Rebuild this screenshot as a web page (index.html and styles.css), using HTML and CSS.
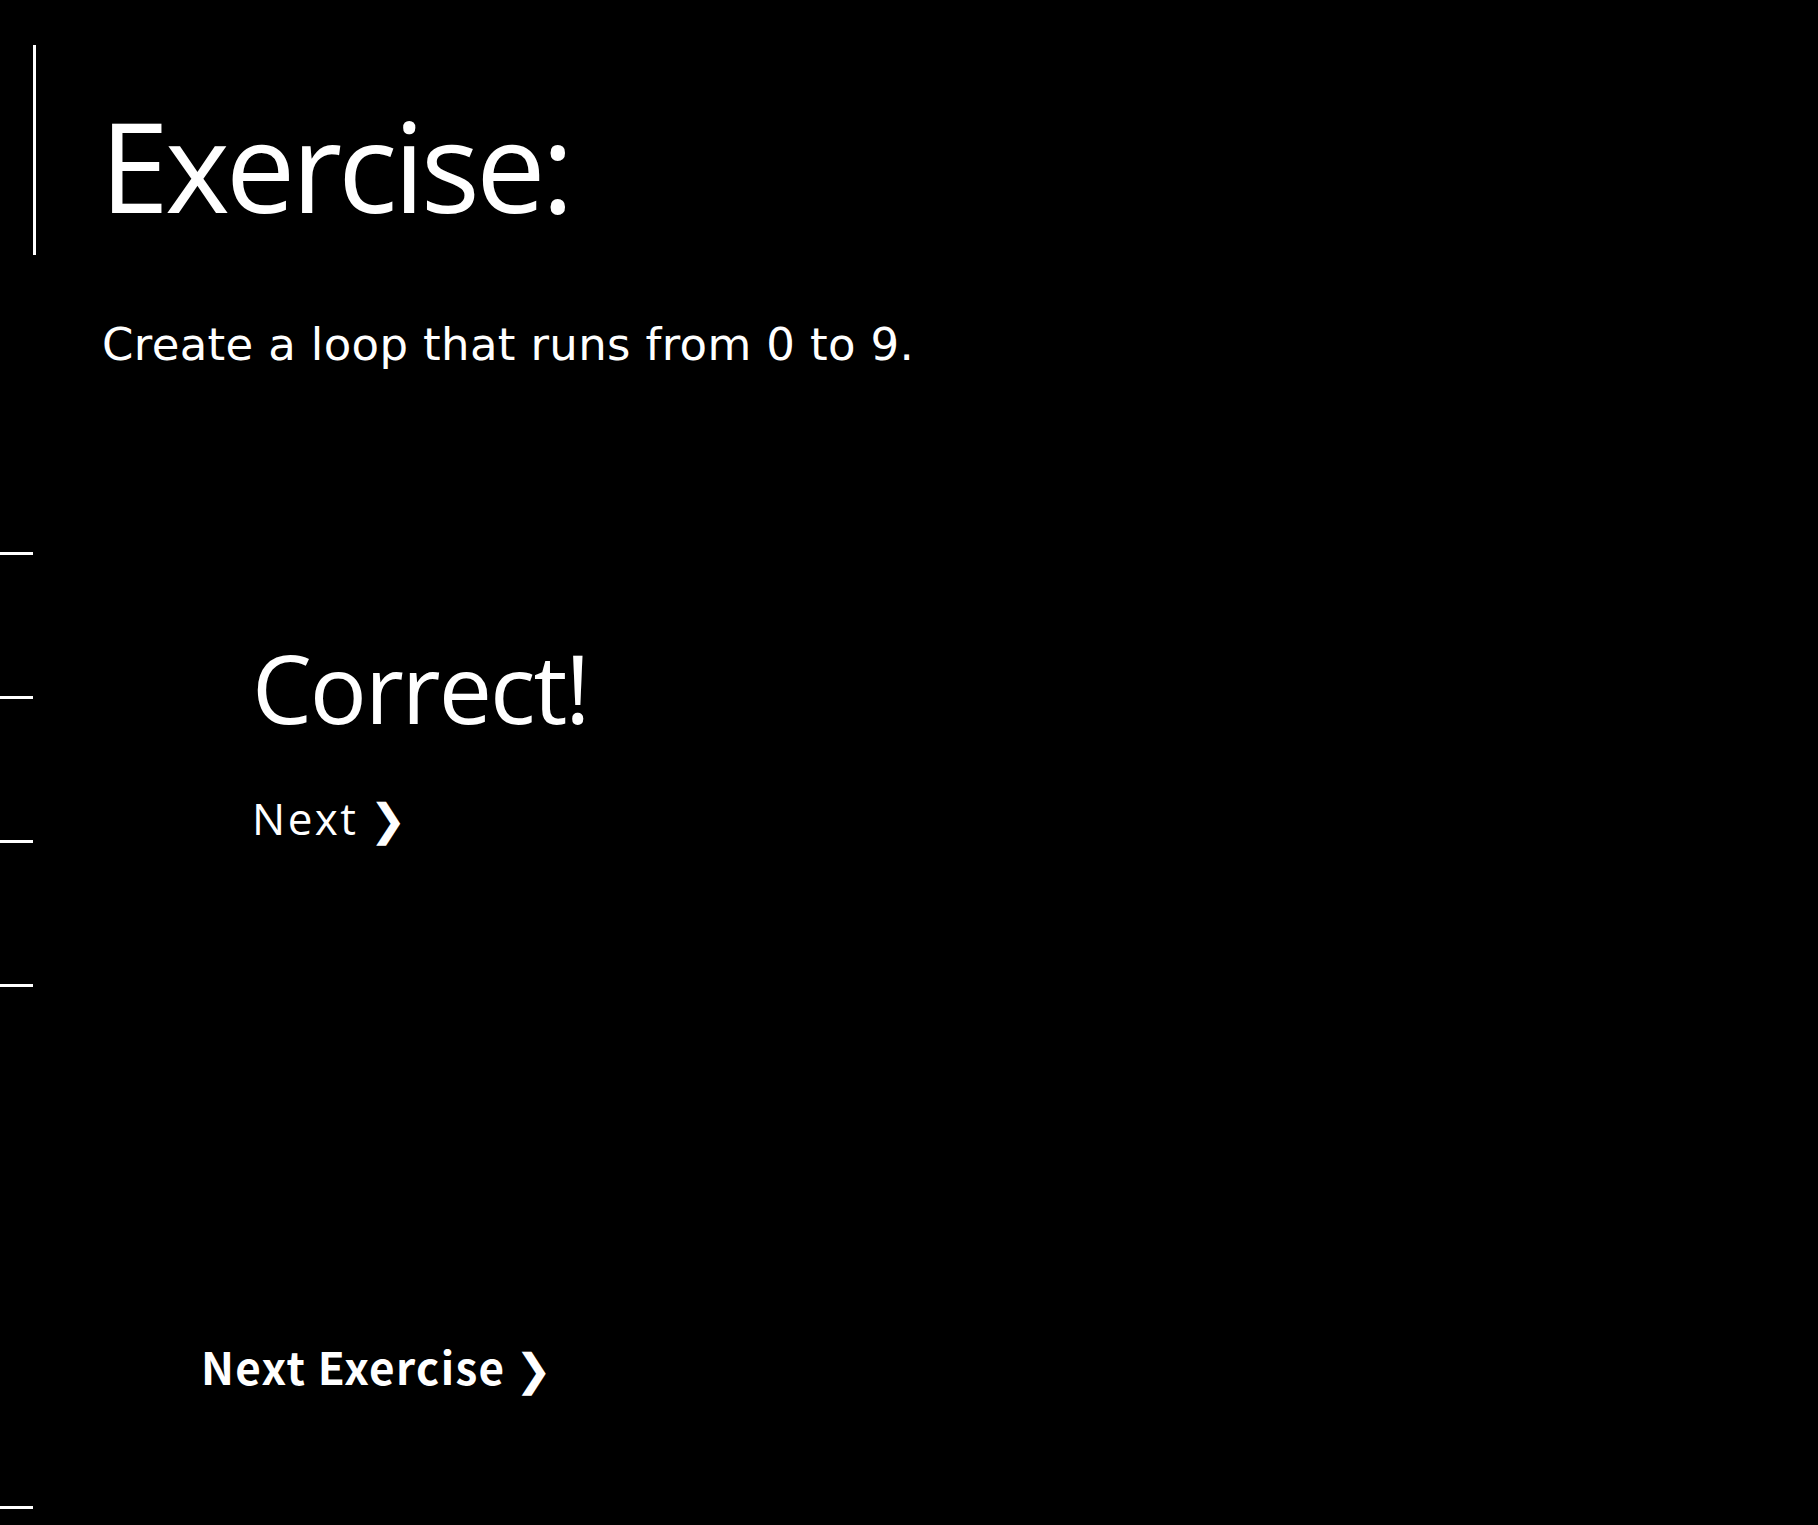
FILE: index.html
```html
<!DOCTYPE html>
<html lang="en">
<head>
<meta charset="utf-8">
<title>Exercise</title>
<link rel="stylesheet" href="styles.css">
</head>
<body>
<div class="page">
  <nav class="rail" aria-hidden="true">
    <span class="tick"></span>
    <span class="tick"></span>
    <span class="tick"></span>
    <span class="tick"></span>
    <span class="tick tick-last"></span>
  </nav>
  <main class="main">
    <header class="exercise-header">
      <h1 class="exercise-title">Exercise:</h1>
    </header>
    <p class="exercise-desc">Create a loop that runs from 0 to 9.</p>
    <section class="result">
      <h2 class="result-title">Correct!</h2>
      <a class="result-next" href="#">Next <span class="chev">&#10095;</span></a>
    </section>
    <a class="next-exercise" href="#">Next Exercise <span class="chev">&#10095;</span></a>
  </main>
</div>
</body>
</html>
```

FILE: styles.css
```css
html, body {
  margin: 0;
  padding: 0;
  background: #000;
  color: #fff;
}

.page {
  display: grid;
  grid-template-columns: 33px 1fr;
  min-height: 1525px;
}

.rail {
  display: flex;
  flex-direction: column;
  padding-top: 552px;
}

.tick {
  display: block;
  width: 33px;
  height: 3px;
  background: #fff;
  margin-bottom: 141px;
}

.tick-last {
  margin-top: 378px;
  margin-bottom: 0;
}

.main {
  display: flex;
  flex-direction: column;
  align-items: flex-start;
}

.exercise-header {
  margin-top: 45px;
  border-left: 3px solid #fff;
  height: 210px;
  box-sizing: border-box;
  padding: 58px 0 0 64px;
}

.exercise-title {
  margin: 0;
  font-family: "Open Sans", "Noto Sans", sans-serif;
  font-weight: 400;
  font-size: 124px;
  line-height: 1;
  letter-spacing: -4px;
}

.exercise-desc {
  margin: 67px 0 0 69px;
  font-family: "DejaVu Sans", sans-serif;
  font-size: 45px;
  line-height: 1;
  letter-spacing: 0.35px;
}

.result {
  margin: 273px 0 0 219px;
  display: flex;
  flex-direction: column;
  align-items: flex-start;
}

.result-title {
  margin: 0;
  font-family: "Open Sans", "Noto Sans", sans-serif;
  font-weight: 400;
  font-size: 95px;
  line-height: 1;
  letter-spacing: -2px;
}

.result-next {
  margin-top: 61px;
  color: #fff;
  text-decoration: none;
  font-family: "Open Sans", "Noto Sans", sans-serif;
  font-size: 44px;
  line-height: 1;
  letter-spacing: 2.5px;
}

.result-next .chev {
  margin-left: -3px;
}

.next-exercise {
  margin: 502px 0 0 168px;
  color: #fff;
  text-decoration: none;
  font-family: "Noto Sans CJK JP", "Noto Sans", sans-serif;
  font-weight: 700;
  font-size: 44px;
  line-height: 1;
  letter-spacing: 1.4px;
}

.next-exercise .chev {
  margin-left: -2px;
}

.chev {
  font-family: "DejaVu Sans", sans-serif;
  font-weight: 400;
  letter-spacing: 0;
}
```
